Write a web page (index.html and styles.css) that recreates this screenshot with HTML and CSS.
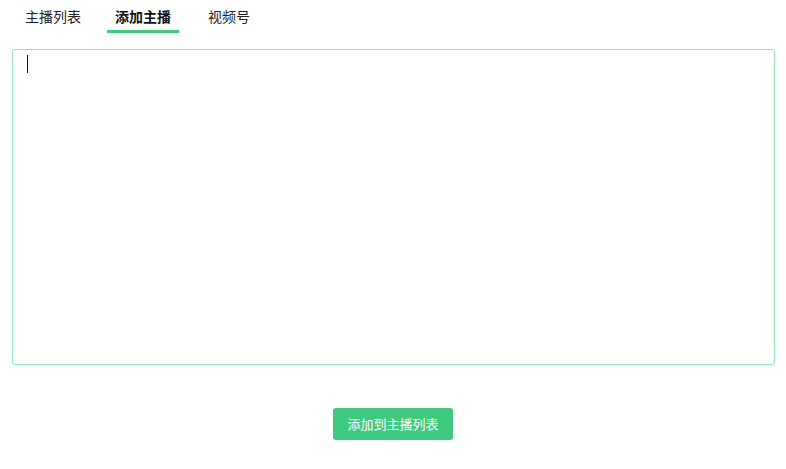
FILE: index.html
```html
<!DOCTYPE html>
<html>
    <head>
        <meta charset="utf-8">
        <link rel="stylesheet" href="styles.css">
    </head>
    <body>
        <ul class="tabs">
            <li class="tab">主播列表</li>
            <li class="tab active">添加主播</li>
            <li class="tab">视频号</li>
        </ul>
        <div class="editor">
            <textarea class="anchorInput"></textarea>
        </div>
        <div class="actions">
            <a href="javascript:;" class="btnAdd">添加到主播列表</a>
        </div>
    </body>
</html>
```

FILE: styles.css
```css
*{
    padding: 0;
    margin: 0;
    box-sizing: border-box;
}
body{
    font-family: "Noto Sans CJK SC", "Microsoft YaHei", sans-serif;
    font-size: 14px;
    color: #222;
    background: #fff;
}
.tabs{
    list-style: none;
    display: flex;
    gap: 18px;
    padding: 5px 0 0 17px;
}
.tab{
    padding: 0 8px 3px;
    line-height: 22px;
    border-bottom: 3px solid transparent;
    cursor: pointer;
}
.tab:last-child{
    margin-left: 3px;
}
.tab.active{
    font-weight: bold;
    color: #111;
    border-bottom-color: #3ec97f;
}
.editor{
    position: relative;
    margin: 16px 11px 0 12px;
}
.editor::after{
    content: "";
    position: absolute;
    left: 15px;
    top: 6px;
    width: 1px;
    height: 18px;
    background: #111;
}
.anchorInput{
    display: block;
    width: 100%;
    height: 316px;
    border: 1px solid #93e6b3;
    border-radius: 3px;
    padding: 5px 14px;
    font: inherit;
    line-height: 18px;
    resize: none;
    outline: none;
    caret-color: transparent;
}
.actions{
    display: flex;
    justify-content: center;
    margin-top: 43px;
}
.btnAdd{
    width: 120px;
    height: 32px;
    line-height: 32px;
    text-align: center;
    background-color: #3ec97f;
    color: #fff;
    font-size: 13px;
    border-radius: 3px;
    text-decoration: none;
}
```
